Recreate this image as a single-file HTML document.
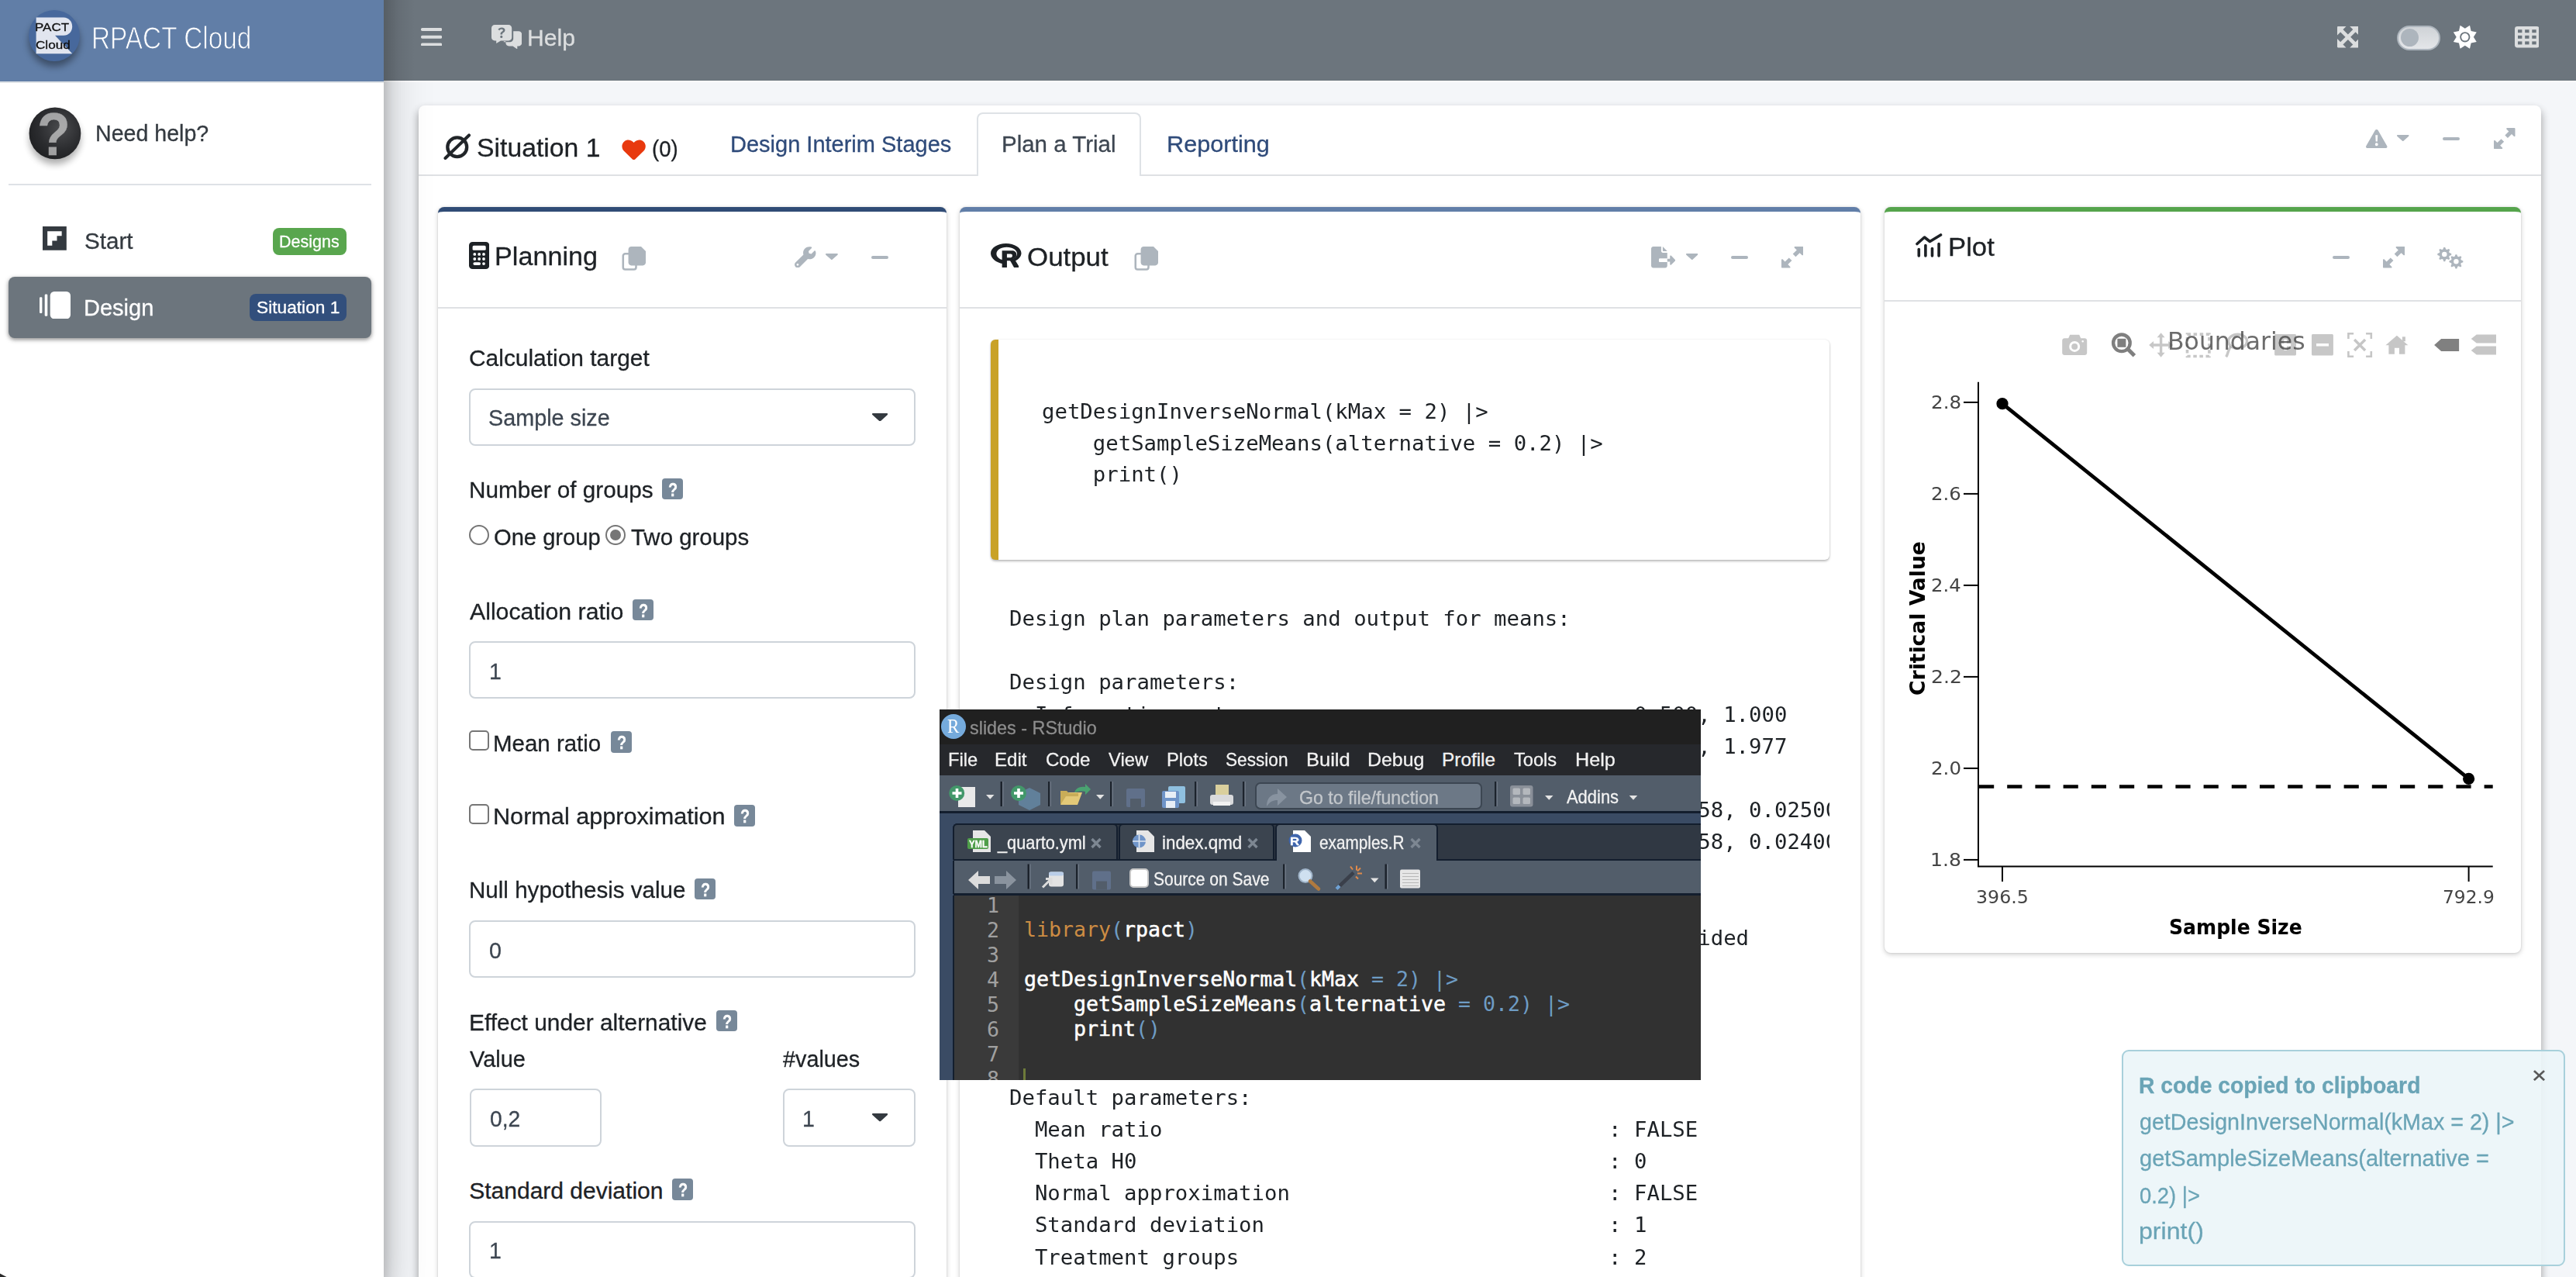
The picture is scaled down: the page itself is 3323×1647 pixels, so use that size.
<!DOCTYPE html>
<html lang="en"><head><meta charset="utf-8"><title>RPACT Cloud</title>
<style>
*{box-sizing:border-box}
html,body{margin:0;padding:0}
body{width:3323px;height:1647px;overflow:hidden;background:#f4f6f9;font-family:"Liberation Sans",sans-serif;color:#212529}
#wrap{position:relative;width:3323px;height:1647px;overflow:hidden;background:#f4f6f9}
#wrap div,#wrap span,#wrap svg,#wrap pre,#wrap a,#wrap h1,#wrap h2,#wrap h3,#wrap label,#wrap p,#wrap b,#wrap i,#wrap li{position:absolute;margin:0;padding:0}
#wrap main,#wrap aside,#wrap header,#wrap section,#wrap nav,#wrap ul,#wrap form,#wrap footer{position:static;display:block;margin:0;padding:0;list-style:none}
#wrap .clip{overflow:hidden}
.t{white-space:pre;line-height:1;transform-origin:0 50%;font-weight:400;font-style:normal;text-decoration:none}
.fs{font-family:"Liberation Sans",sans-serif;-webkit-text-stroke:.3px}
.fm{font-family:"Liberation Mono",monospace}
.fd{font-family:"DejaVu Sans","Liberation Sans",sans-serif}
.fdm{font-family:"DejaVu Sans Mono","Liberation Mono",monospace}
.fse{font-family:"Liberation Serif",serif}
.card{background:#fff;border-radius:8px;box-shadow:0 0 2px rgba(0,0,0,.125),0 2px 6px rgba(0,0,0,.2)}
.hline{background:#dfe1e4;height:2px}
.inp{background:#fff;border:2px solid #ced4da;border-radius:8px}
.hb{background:#778899;border-radius:4px;width:27px;height:27px}
.chk{border:2px solid #767676;border-radius:5px;background:#fff;width:26px;height:26px}
.rad{border:2px solid #767676;border-radius:50%;background:#fff;width:26px;height:26px}
</style></head>
<body>
<div id="wrap">
<main>
<div style="left:495px;top:103px;width:2828px;height:2.6px;background:#fdfdfe"></div>
<div class="card" style="left:540px;top:136px;width:2738px;height:1600px;box-shadow:0 6px 12px rgba(0,0,0,.16),0 6px 12px rgba(0,0,0,.23)"></div>
<div class="hline" style="left:540px;top:225px;width:2738px;height:2px;"></div>
<nav>
<h1 class="t fs" id="t0" style="font-size:34px;color:#1d2125;left:614.67px;top:172.6px;transform:scaleX(0.9926);">Situation 1</h1><svg style="left:572px;top:171.5px;width:35.5px;height:34.5px;" viewBox="0 0 36 35" preserveAspectRatio="none"><circle cx="18" cy="18" r="12.6" fill="none" stroke="#212529" stroke-width="4.4"/><path d="M2.5 32.5L33.5 2.5" stroke="#212529" stroke-width="4" stroke-linecap="round"/></svg>
<svg style="left:801.8px;top:179.7px;width:31.2px;height:26.5px;" viewBox="0 0 32 28" preserveAspectRatio="none"><path fill="#e8390e" d="M16 27.6C15.4 27.6 14.8 27.4 14.3 26.9L3 15.6C-0.6 12-0.4 6 3.4 2.6 6.8-0.4 11.9 0.1 15 3.3L16 4.3 17 3.3C20.1 0.1 25.2-0.4 28.6 2.6 32.4 6 32.6 12 29 15.6L17.7 26.9C17.2 27.4 16.6 27.6 16 27.6Z"/></svg>
<span class="t fs" id="t1" style="font-size:30px;color:#1d2125;left:840.79px;top:176.6px;transform:scaleX(0.9195);">(0)</span><a class="t fs" id="t2" style="font-size:30px;color:#2f4b7a;left:941.52px;top:171.1px;transform:scaleX(0.9667);">Design Interim Stages</a><div style="left:1260px;top:145px;width:212px;height:82px;background:#fff;border:2px solid #dee2e6;border-bottom:none;border-radius:8px 8px 0 0"></div>
<a class="t fs" id="t3" style="font-size:30px;color:#3d4651;left:1292.28px;top:171.1px;transform:scaleX(0.9828);">Plan a Trial</a><a class="t fs" id="t4" style="font-size:30px;color:#2f4b7a;left:1505.19px;top:171.1px;transform:scaleX(1.0216);">Reporting</a><svg style="left:3052px;top:166.8px;width:27.5px;height:24px;" viewBox="0 0 28 24" preserveAspectRatio="none"><path fill="#adb5bd" fill-rule="evenodd" d="M15.9 1.1L27.7 21.2C28.5 22.5 27.5 24 26 24H2C0.5 24-0.5 22.5 0.3 21.2L12.1 1.1C12.9-0.3 15.1-0.3 15.9 1.1ZM12.5 7.2L12.9 15.4H15.1L15.5 7.2ZM14 17.2A2 2 0 1 0 14 21.2 2 2 0 1 0 14 17.2Z"/></svg>
<svg style="left:3092.3px;top:173.8px;width:15.5px;height:8.2px;" viewBox="0 0 20 10" preserveAspectRatio="none"><path fill="#adb5bd" d="M1.2 0H18.8C19.9 0 20.4 1.3 19.6 2L10.9 9.6C10.4 10.1 9.6 10.1 9.1 9.6L0.4 2C-0.4 1.3 0.1 0 1.2 0Z"/></svg>
<div style="left:3151px;top:176.6px;width:21.8px;height:4.3px;background:#adb5bd;border-radius:2px"></div>
<svg style="left:3217px;top:165.1px;width:27.5px;height:27.1px;" viewBox="0 0 28 28" preserveAspectRatio="none"><g fill="#adb5bd"><path d="M17.5 0H27C27.6 0 28 .4 28 1V10.5C28 11.4 26.9 11.8 26.3 11.2L23.4 8.3 18.3 13.4 14.6 9.7 19.7 4.6 16.8 1.7C16.2 1.1 16.6 0 17.5 0Z"/><path d="M10.5 28H1C.4 28 0 27.6 0 27V17.5C0 16.6 1.1 16.2 1.7 16.8L4.6 19.7 9.7 14.6 13.4 18.3 8.3 23.4 11.2 26.3C11.8 26.9 11.4 28 10.5 28Z"/></g></svg>
</nav>
<section>
<div class="card" style="left:565px;top:267px;width:656px;height:1500px;border-top:6px solid #304c76"></div>
<div class="hline" style="left:565px;top:395.5px;width:656px;height:2px;"></div>
<svg style="left:605px;top:312px;width:26.3px;height:35px;" viewBox="0 0 26.300 35" preserveAspectRatio="none"><rect x="0" y="0" width="26.300" height="35" rx="4.600" fill="#1d2125"/><rect x="4.600" y="4.800" width="17.100" height="6" rx="1.600" fill="#fff"/><circle cx="7.3" cy="15.9" r="1.900" fill="#fff"/><circle cx="13.15" cy="15.9" r="1.900" fill="#fff"/><circle cx="19" cy="15.9" r="1.900" fill="#fff"/><circle cx="7.3" cy="22" r="1.900" fill="#fff"/><circle cx="13.15" cy="22" r="1.900" fill="#fff"/><circle cx="19" cy="22" r="1.900" fill="#fff"/><rect x="5.400" y="26.200" width="9.700" height="3.800" rx="1.900" fill="#fff"/><circle cx="19" cy="28.100" r="1.900" fill="#fff"/></svg>
<h3 class="t fs" id="t5" style="font-size:33px;color:#1d2125;left:638.1px;top:314.2px;transform:scaleX(1.0354);">Planning</h3><svg style="left:802.3px;top:318.1px;width:31.5px;height:31px;" viewBox="0 0 32 31" preserveAspectRatio="none"><path fill="none" stroke="#adb5bd" stroke-width="2.6" d="M9.5 9.3H4.6C3 9.3 1.8 10.5 1.8 12.1V26.7C1.8 28.3 3 29.5 4.6 29.5H16C17.6 29.5 18.8 28.3 18.8 26.7V23"/><path fill="#adb5bd" d="M12.6 0H25.4L31.5 6V20.6C31.5 22.8 29.8 24.5 27.6 24.5H12.6C10.4 24.5 8.7 22.8 8.7 20.6V3.9C8.7 1.7 10.4 0 12.6 0Z"/></svg>
<svg style="left:1025.1px;top:318.2px;width:27.6px;height:27.3px;" viewBox="0 0 28 28" preserveAspectRatio="none"><path fill="#adb5bd" fill-rule="evenodd" d="M27.4 6.1C27.2 5.4 26.4 5.2 25.9 5.7L21.9 9.7 18.9 9.1 18.3 6.1 22.3 2.1C22.8 1.6 22.6 .8 21.9 .6 19.1-.4 15.8.3 13.6 2.5 11.4 4.700 10.700 7.900 11.600 10.700L1.200 21.100C-.400 22.700-.400 25.200 1.200 26.800 2.800 28.400 5.300 28.400 6.900 26.800L17.300 16.400C20.100 17.300 23.300 16.600 25.500 14.400 27.700 12.200 28.400 8.900 27.400 6.100ZM4 25.300A1.400 1.400 0 1 1 4 22.500 1.400 1.400 0 1 1 4 25.300Z"/></svg>
<svg style="left:1065px;top:326.6px;width:15.8px;height:8.2px;" viewBox="0 0 20 10" preserveAspectRatio="none"><path fill="#adb5bd" d="M1.2 0H18.8C19.9 0 20.4 1.3 19.6 2L10.9 9.6C10.4 10.1 9.6 10.1 9.1 9.6L0.4 2C-0.4 1.3 0.1 0 1.2 0Z"/></svg>
<div style="left:1123.8px;top:329.8px;width:22.4px;height:4.2px;background:#adb5bd;border-radius:2px"></div>
<form>
<label class="t fs" id="t6" style="font-size:30px;color:#1d2125;left:604.88px;top:447.4px;transform:scaleX(0.9969);">Calculation target</label><div class="inp" style="left:605px;top:501px;width:575.5px;height:74.4px;"></div>
<span class="t fs" id="t7" style="font-size:30px;color:#3d4651;left:630.49px;top:524.2px;transform:scaleX(0.9589);">Sample size</span><svg style="left:1124.6px;top:532.7px;width:20.3px;height:10.4px;" viewBox="0 0 20 10" preserveAspectRatio="none"><path fill="#343a40" d="M1.2 0H18.8C19.9 0 20.4 1.3 19.6 2L10.9 9.6C10.4 10.1 9.6 10.1 9.1 9.6L0.4 2C-0.4 1.3 0.1 0 1.2 0Z"/></svg>
<label class="t fs" id="t8" style="font-size:30px;color:#1d2125;left:604.96px;top:617.1px;transform:scaleX(0.9895);">Number of groups</label><div class="hb" style="left:854.1px;top:616.9px;width:27.4px;height:27.3px;"></div>
<span class="t fs" id="t9" style="font-size:23.5px;color:#fff;font-weight:700;left:861.99px;top:620.9px;transform:scaleX(0.8468);">?</span><div class="rad" style="left:605.2px;top:677px;width:26px;height:26px;"></div>
<span class="t fs" id="t10" style="font-size:30px;color:#1d2125;left:637.32px;top:678.2px;transform:scaleX(0.9712);">One group</span><div class="rad" style="left:781.1px;top:677px;width:26px;height:26px;"><i style="left:4px;top:4px;width:14px;height:14px;border-radius:50%;background:#767676"></i></div>
<span class="t fs" id="t11" style="font-size:30px;color:#1d2125;left:814.24px;top:678.2px;transform:scaleX(0.9815);">Two groups</span><label class="t fs" id="t12" style="font-size:30px;color:#1d2125;left:605.94px;top:773.8px;transform:scaleX(1.0084);">Allocation ratio</label><div class="hb" style="left:816px;top:773.1px;width:27.4px;height:27.3px;"></div>
<span class="t fs" id="t13" style="font-size:23.5px;color:#fff;font-weight:700;left:823.89px;top:777.1px;transform:scaleX(0.8468);">?</span><div class="inp" style="left:605px;top:827px;width:575.5px;height:74.4px;"></div>
<span class="t fs" id="t14" style="font-size:30px;color:#3d4651;left:631.03px;top:850.9px;transform:scaleX(0.9507);">1</span><div class="chk" style="left:605.2px;top:942.3px;width:26px;height:26px;"></div>
<label class="t fs" id="t15" style="font-size:30px;color:#1d2125;left:636.28px;top:943.8px;transform:scaleX(0.9824);">Mean ratio</label><div class="hb" style="left:788px;top:943.3px;width:27.4px;height:27.3px;"></div>
<span class="t fs" id="t16" style="font-size:23.5px;color:#fff;font-weight:700;left:795.89px;top:947.3px;transform:scaleX(0.8468);">?</span><div class="chk" style="left:605.2px;top:1037px;width:26px;height:26px;"></div>
<label class="t fs" id="t17" style="font-size:30px;color:#1d2125;left:636.19px;top:1038.3px;transform:scaleX(1.021);">Normal approximation</label><div class="hb" style="left:947px;top:1038.3px;width:27.4px;height:27.3px;"></div>
<span class="t fs" id="t18" style="font-size:23.5px;color:#fff;font-weight:700;left:954.89px;top:1042.3px;transform:scaleX(0.8468);">?</span><label class="t fs" id="t19" style="font-size:30px;color:#1d2125;left:604.97px;top:1133.4px;transform:scaleX(0.9857);">Null hypothesis value</label><div class="hb" style="left:896px;top:1133.2px;width:27.4px;height:27.3px;"></div>
<span class="t fs" id="t20" style="font-size:23.5px;color:#fff;font-weight:700;left:903.89px;top:1137.2px;transform:scaleX(0.8468);">?</span><div class="inp" style="left:605px;top:1187px;width:575.5px;height:74.4px;"></div>
<span class="t fs" id="t21" style="font-size:30px;color:#3d4651;left:630.68px;top:1210.7px;transform:scaleX(0.9551);">0</span><label class="t fs" id="t22" style="font-size:30px;color:#1d2125;left:605.05px;top:1303.5px;transform:scaleX(0.9965);">Effect under alternative</label><div class="hb" style="left:924px;top:1303px;width:27.4px;height:27.3px;"></div>
<span class="t fs" id="t23" style="font-size:23.5px;color:#fff;font-weight:700;left:931.89px;top:1307px;transform:scaleX(0.8468);">?</span><label class="t fs" id="t24" style="font-size:30px;color:#1d2125;left:605.87px;top:1350.7px;transform:scaleX(0.9651);">Value</label><label class="t fs" id="t25" style="font-size:30px;color:#1d2125;left:1010.47px;top:1350.7px;transform:scaleX(0.96);">#values</label><div class="inp" style="left:606px;top:1404px;width:170px;height:75px;"></div>
<span class="t fs" id="t26" style="font-size:30px;color:#3d4651;left:631.5px;top:1428px;transform:scaleX(0.9427);">0,2</span><div class="inp" style="left:1010px;top:1404px;width:171px;height:75px;"></div>
<span class="t fs" id="t27" style="font-size:30px;color:#3d4651;left:1035.33px;top:1428px;transform:scaleX(0.9507);">1</span><svg style="left:1124.6px;top:1436.2px;width:20.3px;height:10.4px;" viewBox="0 0 20 10" preserveAspectRatio="none"><path fill="#343a40" d="M1.2 0H18.8C19.9 0 20.4 1.3 19.6 2L10.9 9.6C10.4 10.1 9.6 10.1 9.1 9.6L0.4 2C-0.4 1.3 0.1 0 1.2 0Z"/></svg>
<label class="t fs" id="t28" style="font-size:30px;color:#1d2125;left:605.24px;top:1520.9px;">Standard deviation</label><div class="hb" style="left:867px;top:1520.4px;width:27.4px;height:27.3px;"></div>
<span class="t fs" id="t29" style="font-size:23.5px;color:#fff;font-weight:700;left:874.89px;top:1524.4px;transform:scaleX(0.8468);">?</span><div class="inp" style="left:605px;top:1575px;width:575.5px;height:74px;"></div>
<span class="t fs" id="t30" style="font-size:30px;color:#3d4651;left:631.03px;top:1597.6px;transform:scaleX(0.9507);">1</span></form>
</section>
<section>
<div class="card" style="left:1238px;top:267px;width:1162px;height:1500px;border-top:6px solid #617ea8"></div>
<div class="hline" style="left:1238px;top:395.5px;width:1162px;height:2px;"></div>
<svg style="left:1278px;top:314px;width:39.5px;height:31.3px;" viewBox="0 0 40 31.5" preserveAspectRatio="none"><path fill="#1d2125" fill-rule="evenodd" d="M20 0C31 0 40 5.600 40 12.600 40 16.800 36.800 20.500 31.800 22.800L29.800 19.600C32.700 18.200 34.500 15.900 34.500 13.400 34.500 8.600 28.800 4.700 20.900 4.700 13 4.700 7.500 8.600 7.500 13.400 7.500 17.200 10.900 20.400 16 21.600V26.300C6.800 24.900 0 19.300 0 12.600 0 5.600 9 0 20 0Z"/><path fill="#1d2125" fill-rule="evenodd" d="M14.800 9.400H27.600C31.400 9.400 33.800 11.400 33.800 14.600 33.800 17.200 32.200 19 29.800 19.700 30.800 20.100 31.400 20.800 32.200 22.100L36.500 29.300V31.500H30.600L26.600 24.300C25.800 22.900 25.200 22.500 24 22.500H21.200V31.500H14.800ZM21.200 13.600V18.300H26C27.400 18.300 28.300 17.400 28.300 15.900 28.300 14.400 27.400 13.600 26 13.600Z"/></svg>
<h3 class="t fs" id="t31" style="font-size:33px;color:#1d2125;left:1324.95px;top:314.8px;transform:scaleX(1.0568);">Output</h3><svg style="left:1462.9px;top:318.1px;width:31.5px;height:31px;" viewBox="0 0 32 31" preserveAspectRatio="none"><path fill="none" stroke="#adb5bd" stroke-width="2.6" d="M9.5 9.3H4.6C3 9.3 1.8 10.5 1.8 12.1V26.7C1.8 28.3 3 29.5 4.6 29.5H16C17.6 29.5 18.8 28.3 18.8 26.7V23"/><path fill="#adb5bd" d="M12.6 0H25.4L31.5 6V20.6C31.5 22.8 29.8 24.5 27.6 24.5H12.6C10.4 24.5 8.7 22.8 8.7 20.6V3.9C8.7 1.7 10.4 0 12.6 0Z"/></svg>
<svg style="left:2130px;top:318px;width:31.3px;height:27.5px;" viewBox="0 0 31.5 27.5" preserveAspectRatio="none"><path fill="#adb5bd" d="M2.800 0H13V5.800C13 7 14 8 15.200 8H20.900V15.200H11.400C10.600 15.200 10 15.800 10 16.600V18.700C10 19.500 10.600 20.100 11.400 20.100H20.900V24.700C20.900 26.200 19.700 27.500 18.100 27.500H2.800C1.300 27.500 0 26.200 0 24.700V2.800C0 1.300 1.300 0 2.800 0ZM15 0L20.900 6H15.900C15.400 6 15 5.600 15 5.100Z"/><path fill="#adb5bd" d="M31.100 16.900L26 11.800C25.400 11.200 24.400 11.600 24.400 12.500V15.700H20.900V19.600H24.400V22.800C24.400 23.700 25.400 24.100 26 23.500L31.100 18.400C31.500 18 31.500 17.300 31.100 16.900Z"/></svg>
<svg style="left:2174.5px;top:326.6px;width:15.5px;height:8.2px;" viewBox="0 0 20 10" preserveAspectRatio="none"><path fill="#adb5bd" d="M1.2 0H18.8C19.9 0 20.4 1.3 19.6 2L10.9 9.6C10.4 10.1 9.6 10.1 9.1 9.6L0.4 2C-0.4 1.3 0.1 0 1.2 0Z"/></svg>
<div style="left:2233.4px;top:329.8px;width:22px;height:4.2px;background:#adb5bd;border-radius:2px"></div>
<svg style="left:2297.6px;top:318px;width:28.2px;height:27.6px;" viewBox="0 0 28 28" preserveAspectRatio="none"><g fill="#adb5bd"><path d="M17.5 0H27C27.6 0 28 .4 28 1V10.5C28 11.4 26.9 11.8 26.3 11.2L23.4 8.3 18.3 13.4 14.6 9.7 19.7 4.6 16.8 1.7C16.2 1.1 16.6 0 17.5 0Z"/><path d="M10.5 28H1C.4 28 0 27.6 0 27V17.5C0 16.6 1.1 16.2 1.7 16.8L4.6 19.7 9.7 14.6 13.4 18.3 8.3 23.4 11.2 26.3C11.8 26.9 11.4 28 10.5 28Z"/></g></svg>
<div style="left:1278px;top:438px;width:1082px;height:284px;background:#fff;border-left:10px solid #c9a227;border-radius:6px;box-shadow:0 2px 3px rgba(0,0,0,.25),0 0 2px rgba(0,0,0,.12)"></div>
<pre class="t fdm" id="t32" style="font-size:26.4px;color:#1d2125;left:1343.6px;top:517.8px;transform:scaleX(1.0353);">getDesignInverseNormal(kMax = 2) |&gt;</pre><pre class="t fdm" id="t33" style="font-size:26.4px;color:#1d2125;left:1343.6px;top:558.6px;transform:scaleX(1.0353);">    getSampleSizeMeans(alternative = 0.2) |&gt;</pre><pre class="t fdm" id="t34" style="font-size:26.4px;color:#1d2125;left:1343.6px;top:599px;transform:scaleX(1.0353);">    print()</pre><div class="clip" style="left:1278px;top:740px;width:1082px;height:920px;"><pre class="t fdm" id="t35" style="font-size:26.4px;color:#1d2125;left:23.6px;top:45px;transform:scaleX(1.0353);">Design plan parameters and output for means:</pre>
<pre class="t fdm" id="t36" style="font-size:26.4px;color:#1d2125;left:23.6px;top:127.36px;transform:scaleX(1.0353);">Design parameters:</pre>
<pre class="t fdm" id="t37" style="font-size:26.4px;color:#1d2125;left:23.6px;top:168.54px;transform:scaleX(1.0353);">  Information rates                            : 0.500, 1.000</pre>
<pre class="t fdm" id="t38" style="font-size:26.4px;color:#1d2125;left:23.6px;top:209.72px;transform:scaleX(1.0353);">  Critical values                              : 2.797, 1.977</pre>
<pre class="t fdm" id="t39" style="font-size:26.4px;color:#1d2125;left:23.6px;top:250.9px;transform:scaleX(1.0353);">  Futility bounds (binding)                    : -Inf</pre>
<pre class="t fdm" id="t40" style="font-size:26.4px;color:#1d2125;left:23.6px;top:292.08px;transform:scaleX(1.0353);">  Cumulative alpha spending                    : 0.00258, 0.02500</pre>
<pre class="t fdm" id="t41" style="font-size:26.4px;color:#1d2125;left:23.6px;top:333.26px;transform:scaleX(1.0353);">  Local one-sided significance levels          : 0.00258, 0.02400</pre>
<pre class="t fdm" id="t42" style="font-size:26.4px;color:#1d2125;left:23.6px;top:374.44px;transform:scaleX(1.0353);">  Significance level                           : 0.025</pre>
<pre class="t fdm" id="t43" style="font-size:26.4px;color:#1d2125;left:23.6px;top:415.62px;transform:scaleX(1.0353);">  Type II error rate                           : 0.200</pre>
<pre class="t fdm" id="t44" style="font-size:26.4px;color:#1d2125;left:23.6px;top:456.8px;transform:scaleX(1.0353);">  Test                                         : one-sided</pre>
<pre class="t fdm" id="t45" style="font-size:26.4px;color:#1d2125;left:23.6px;top:539.16px;transform:scaleX(1.0353);">User defined parameters:</pre>
<pre class="t fdm" id="t46" style="font-size:26.4px;color:#1d2125;left:23.6px;top:580.34px;transform:scaleX(1.0353);">  Alternatives                                 : 0.2</pre>
<pre class="t fdm" id="t47" style="font-size:26.4px;color:#1d2125;left:23.6px;top:662.7px;transform:scaleX(1.0353);">Default parameters:</pre>
<pre class="t fdm" id="t48" style="font-size:26.4px;color:#1d2125;left:23.6px;top:703.88px;transform:scaleX(1.0353);">  Mean ratio                                   : FALSE</pre>
<pre class="t fdm" id="t49" style="font-size:26.4px;color:#1d2125;left:23.6px;top:745.06px;transform:scaleX(1.0353);">  Theta H0                                     : 0</pre>
<pre class="t fdm" id="t50" style="font-size:26.4px;color:#1d2125;left:23.6px;top:786.24px;transform:scaleX(1.0353);">  Normal approximation                         : FALSE</pre>
<pre class="t fdm" id="t51" style="font-size:26.4px;color:#1d2125;left:23.6px;top:827.42px;transform:scaleX(1.0353);">  Standard deviation                           : 1</pre>
<pre class="t fdm" id="t52" style="font-size:26.4px;color:#1d2125;left:23.6px;top:868.6px;transform:scaleX(1.0353);">  Treatment groups                             : 2</pre></div>
</section>
<section>
<div class="card" style="left:2431px;top:267px;width:821px;height:962px;border-top:6px solid #55a44c"></div>
<div class="hline" style="left:2431px;top:386.5px;width:821px;height:2px;"></div>
<svg style="left:2471.4px;top:301.4px;width:34.5px;height:31px;" viewBox="0 0 34.5 31" preserveAspectRatio="none"><g fill="none" stroke="#1d2125" stroke-width="3.6" stroke-linecap="round" stroke-linejoin="round"><path d="M2 13.500L11.500 5 18.500 10.500 32.500 2"/><path d="M4.300 20.500V29"/><path d="M12.900 15.500V29"/><path d="M21.500 19.500V29"/><path d="M30.100 13.500V29"/></g></svg>
<h3 class="t fs" id="t53" style="font-size:33px;color:#1d2125;left:2513.05px;top:302.2px;transform:scaleX(1.0514);">Plot</h3><div style="left:3008.7px;top:329.8px;width:22px;height:4.2px;background:#adb5bd;border-radius:2px"></div>
<svg style="left:3074px;top:318px;width:28.2px;height:27.6px;" viewBox="0 0 28 28" preserveAspectRatio="none"><g fill="#adb5bd"><path d="M17.5 0H27C27.6 0 28 .4 28 1V10.5C28 11.4 26.9 11.8 26.3 11.2L23.4 8.3 18.3 13.4 14.6 9.7 19.7 4.6 16.8 1.7C16.2 1.1 16.6 0 17.5 0Z"/><path d="M10.5 28H1C.4 28 0 27.6 0 27V17.5C0 16.6 1.1 16.2 1.7 16.8L4.6 19.7 9.7 14.6 13.4 18.3 8.3 23.4 11.2 26.3C11.8 26.9 11.4 28 10.5 28Z"/></g></svg>
<svg style="left:3143.8px;top:319.3px;width:34.2px;height:27.5px;" viewBox="0 0 35 27.5" preserveAspectRatio="none"><path fill="#adb5bd" fill-rule="evenodd" d="M18.66 8.10L18.66 9.90L16.01 10.97L15.50 12.21L16.61 14.84L15.34 16.11L12.71 15.00L11.47 15.51L10.40 18.16L8.60 18.16L7.53 15.51L6.29 15.00L3.66 16.11L2.39 14.84L3.50 12.21L2.99 10.97L0.34 9.90L0.34 8.10L2.99 7.03L3.50 5.79L2.39 3.16L3.66 1.89L6.29 3.00L7.53 2.49L8.60 -0.16L10.40 -0.16L11.47 2.49L12.71 3.00L15.34 1.89L16.61 3.16L15.50 5.79L16.01 7.03ZM6.19 9.00A3.31 3.31 0 1 0 12.81 9.00 3.31 3.31 0 1 0 6.19 9.00ZM34.16 17.40L34.16 19.20L31.51 20.27L31.00 21.51L32.11 24.14L30.84 25.41L28.21 24.30L26.97 24.81L25.90 27.46L24.10 27.46L23.03 24.81L21.79 24.30L19.16 25.41L17.89 24.14L19.00 21.51L18.49 20.27L15.84 19.20L15.84 17.40L18.49 16.33L19.00 15.09L17.89 12.46L19.16 11.19L21.79 12.30L23.03 11.79L24.10 9.14L25.90 9.14L26.97 11.79L28.21 12.30L30.84 11.19L32.11 12.46L31.00 15.09L31.51 16.33ZM21.69 18.30A3.31 3.31 0 1 0 28.31 18.30 3.31 3.31 0 1 0 21.69 18.30Z"/></svg>
<span class="t fd" id="t54" style="font-size:31.7px;color:#6c6c6c;left:2795.51px;top:424.6px;transform:scaleX(0.9942);">Boundaries</span><svg style="left:2650px;top:420px;width:590px;height:50px;" viewBox="2650 420 590 50"><g transform="translate(2660.200 431.700)"><path fill="#444" opacity=".3" fill-rule="evenodd" d="M3 4.500H8L10 0H22L24 4.500H29C30.700 4.500 32 5.800 32 7.500V23.200C32 24.900 30.700 26.200 29 26.200H3C1.300 26.200 0 24.900 0 23.200V7.500C0 5.800 1.300 4.500 3 4.500ZM16 8.200A7 7 0 1 0 16 22.200 7 7 0 1 0 16 8.200ZM16 11.200A4 4 0 1 1 16 19.200 4 4 0 1 1 16 11.200ZM26.500 7.200A1.300 1.300 0 1 0 26.500 9.800 1.300 1.300 0 1 0 26.500 7.200Z"/></g><g transform="translate(2723.900 429.300)" opacity=".68"><circle cx="13" cy="13" r="10.800" fill="none" stroke="#444" stroke-width="4.400"/><rect x="7.500" y="7.500" width="11" height="11" fill="#444"/><path d="M21.500 21.500L29.500 29.500" stroke="#444" stroke-width="5" stroke-linecap="butt"/></g><g transform="translate(2772.100 429.300)" fill="#444" opacity=".3"><path d="M15.500 0L20.500 6H17.200V14H25V10.700L31 15.700 25 20.700V17.400H17.200V25.400H20.500L15.500 31.400 10.500 25.400H13.800V17.400H6V20.700L0 15.700 6 10.700V14H13.800V6H10.500Z"/></g><g transform="translate(2819.700 429.300)"><rect x="1.800" y="1.800" width="28.400" height="28.400" fill="none" stroke="#444" opacity=".3" stroke-width="3.600" stroke-dasharray="4.500 3.600"/></g><g transform="translate(2869.600 429.300)"><ellipse cx="17" cy="11" rx="12" ry="9" fill="none" stroke="#444" opacity=".3" stroke-width="3.400"/><path d="M8 18C4 22 5 27 2 31" fill="none" stroke="#444" opacity=".3" stroke-width="3.400"/></g><g transform="translate(2934.100 431)"><path fill-rule="evenodd" fill="#444" opacity=".3" d="M1.500 0H26.400C27.200 0 27.900 .7 27.900 1.500V26.100C27.900 26.900 27.200 27.600 26.400 27.600H1.500C.7 27.600 0 26.900 0 26.100V1.500C0 .7 .7 0 1.500 0ZM12.200 6.800V12H7V15.600H12.200V20.800H15.800V15.600H21V12H15.800V6.800Z"/></g><g transform="translate(2982 431)"><path fill-rule="evenodd" fill="#444" opacity=".3" d="M1.500 0H26.400C27.200 0 27.900 .7 27.900 1.500V26.100C27.900 26.900 27.200 27.600 26.400 27.600H1.500C.7 27.600 0 26.900 0 26.100V1.500C0 .7 .7 0 1.500 0ZM6 12V15.600H22V12Z"/></g><g transform="translate(3028.100 429)" fill="none" stroke="#444" opacity=".3" stroke-width="2.600"><path d="M1.300 8V1.300H8M24 1.300H30.700V8M30.700 24V30.700H24M8 30.700H1.300V24"/><path d="M9 9L23 23M23 9L9 23" stroke-width="3.400"/></g><g transform="translate(3077.400 432.800)" fill="#444" opacity=".3"><path d="M14.500 0L29 12.500H25V24H17.500V16H11.500V24H4V12.500H0Z"/><rect x="21.500" y="1.500" width="4" height="6"/></g><g transform="translate(3140.100 436.900)" fill="#444" opacity=".68"><path d="M9 0H32V16.100H9L0 8Z"/></g><g transform="translate(3187.700 431.400)" fill="#444" opacity=".3"><path d="M7 0H32.300V11H7L0 5.500Z"/><path d="M7 15H32.300V26H7L0 20.500Z"/></g></svg>
<svg style="left:2431px;top:390px;width:821px;height:839px" viewBox="2431 390 821 839"><g stroke="#000" stroke-width="2" fill="none"><path d="M2552 492.7V1117.4H3215.7"/><path d="M2533 518.9H2552"/><path d="M2533 636.9H2552"/><path d="M2533 754.9H2552"/><path d="M2533 872.9H2552"/><path d="M2533 990.9H2552"/><path d="M2533 1108.9H2552"/><path d="M2583 1117.4V1137"/><path d="M3184.6 1117.4V1137"/></g><path d="M2553 1014.5H3215.7" stroke="#000" stroke-width="4.6" stroke-dasharray="19.2 17" fill="none"/><path d="M2583 520.67L3184.6 1004.47" stroke="#000" stroke-width="4.8" fill="none"/><circle cx="2583" cy="520.67" r="7.6"/><circle cx="3184.6" cy="1004.47" r="7.6"/></svg>
<span class="t fd" id="t55" style="font-size:22.7px;color:#444;left:2490.8px;top:508.3px;transform:scaleX(1.0827);">2.8</span><span class="t fd" id="t56" style="font-size:22.7px;color:#444;left:2490.81px;top:626.3px;transform:scaleX(1.0787);">2.6</span><span class="t fd" id="t57" style="font-size:22.7px;color:#444;left:2490.81px;top:744.3px;transform:scaleX(1.0737);">2.4</span><span class="t fd" id="t58" style="font-size:22.7px;color:#444;left:2490.76px;top:862.3px;transform:scaleX(1.107);">2.2</span><span class="t fd" id="t59" style="font-size:22.7px;color:#444;left:2490.8px;top:980.3px;transform:scaleX(1.0813);">2.0</span><span class="t fd" id="t60" style="font-size:22.7px;color:#444;left:2489.83px;top:1098.3px;transform:scaleX(1.1108);">1.8</span><span class="t fd" id="t61" style="font-size:22.7px;color:#444;left:2549.19px;top:1146.4px;transform:scaleX(1.0451);">396.5</span><span class="t fd" id="t62" style="font-size:22.7px;color:#444;left:3151.49px;top:1146.4px;transform:scaleX(1.0277);">792.9</span><span class="t fd" id="t63" style="font-size:27px;color:#000;font-weight:700;left:2797.6px;top:1181.6px;transform:scaleX(0.929);">Sample Size</span><div style="left:2483.2px;top:896.3px;width:0;height:0;transform:rotate(-90deg);transform-origin:0 0"><span class="t fd" id="t64" style="font-size:27.4px;color:#000;font-weight:700;left:-1.33px;top:-23px;transform:scaleX(0.9713);">Critical Value</span></div>
</section>
</main>
<aside>
<div style="left:0px;top:0px;width:495px;height:1647px;background:#fff;box-shadow:0 28px 56px rgba(0,0,0,.25),0 20px 20px rgba(0,0,0,.22)"></div>
<div style="left:0px;top:0px;width:495px;height:104.5px;background:#617ea7"></div>
<div style="left:0px;top:104.5px;width:495px;height:2px;background:#dee2e6"></div>
<svg style="left:20px;top:-4px;width:100px;height:100px;" viewBox="0 0 100 100" preserveAspectRatio="none"><defs><filter id="lsh" x="-40%" y="-40%" width="180%" height="200%"><feGaussianBlur stdDeviation="5"/></filter></defs><ellipse cx="50" cy="57" rx="33" ry="33" fill="#000" opacity=".38" filter="url(#lsh)"/><circle cx="50" cy="50" r="33" fill="#47689c"/><path fill="#e1e5ef" d="M26.600 26.600H62C68.500 26.600 73.200 31.800 73.200 38.200 73.200 44.600 68.500 49.800 62 49.800H51L73.200 73.200H26.600Z"/></svg>
<span class="t fs" id="t65" style="font-size:15px;color:#111;left:45.21px;top:26.9px;transform:scaleX(1.1331);">PACT</span><span class="t fs" id="t66" style="font-size:15px;color:#111;left:45.73px;top:50px;transform:scaleX(1.1394);">Cloud</span><span class="t fs" id="t67" style="font-size:40.5px;color:#fff;left:117.76px;top:29px;transform:scaleX(0.8236);-webkit-text-stroke:1px #617ea7;">RPACT Cloud</span><svg style="left:20.5px;top:121.5px;width:99.9px;height:99.9px;" viewBox="0 0 100 100" preserveAspectRatio="none"><defs><filter id="hsh" x="-40%" y="-40%" width="180%" height="200%"><feGaussianBlur stdDeviation="5"/></filter><radialGradient id="hg" cx="60%" cy="40%" r="70%"><stop offset="0" stop-color="#4a4b4e"/><stop offset=".6" stop-color="#2b2c2f"/><stop offset="1" stop-color="#1d1e20"/></radialGradient></defs><ellipse cx="50" cy="57" rx="33" ry="33" fill="#000" opacity=".32" filter="url(#hsh)"/><circle cx="50" cy="50" r="33.400" fill="url(#hg)"/></svg>
<span class="t fs" id="t68" style="font-size:78px;color:#cfcfcf;font-weight:700;left:48.29px;top:133.5px;transform:scaleX(0.8969);opacity:.72;">?</span><a class="t fs" id="t69" style="font-size:30px;color:#343a40;left:123.36px;top:157px;transform:scaleX(0.9527);">Need help?</a><div style="left:11px;top:236.5px;width:468px;height:2px;background:#dee2e6"></div>
<ul>
<svg style="left:55.2px;top:292.1px;width:30.8px;height:30.8px;" viewBox="0 0 31 31" preserveAspectRatio="none"><path fill="#343a40" fill-rule="evenodd" d="M0 0H31V31H0ZM6.200 6.200V24.800H12.400V18.600H18.600V12.400H24.800V6.200Z"/></svg>
<a class="t fs" id="t70" style="font-size:30px;color:#343a40;left:108.65px;top:296px;transform:scaleX(0.9874);">Start</a><div style="left:352px;top:294px;width:95px;height:34.8px;background:#59a64e;border-radius:8px"></div>
<span class="t fs" id="t71" style="font-size:22.5px;color:#fff;left:360.43px;top:301.2px;transform:scaleX(0.9563);">Designs</span><div style="left:11px;top:357px;width:468px;height:78.6px;background:#6c757d;border-radius:8px;box-shadow:0 2px 6px rgba(0,0,0,.3),0 2px 4px rgba(0,0,0,.2)"></div>
<svg style="left:50.5px;top:375.7px;width:40px;height:35.3px;" viewBox="0 0 40 35.300" preserveAspectRatio="none"><g fill="#fff"><rect x="0" y="7.300" width="3.400" height="20.700" rx="1.200"/><rect x="6.700" y="3.600" width="3.600" height="28.100" rx="1.200"/><rect x="13.700" y="0" width="26.300" height="35.300" rx="5.200"/></g></svg>
<a class="t fs" id="t72" style="font-size:30px;color:#fff;left:107.62px;top:381.8px;transform:scaleX(0.9676);">Design</a><div style="left:321.8px;top:379px;width:125.2px;height:34.8px;background:#324f7c;border-radius:8px"></div>
<span class="t fs" id="t73" style="font-size:22.5px;color:#fff;left:330.67px;top:386.2px;transform:scaleX(1.0095);">Situation 1</span></ul>
<svg style="left:0;top:1641px;width:10px;height:6px" viewBox="0 0 10 6"><path d="M0 1.500L8.500 6H0Z" fill="#2b2b2b"/></svg>
</aside>
<header>
<div style="left:495px;top:0px;width:2828px;height:103.6px;background:#6c757d"></div>
<div style="left:495px;top:0px;width:40px;height:103.5px;background:linear-gradient(90deg,rgba(0,0,0,.2),rgba(0,0,0,.07) 45%,rgba(0,0,0,0))"></div>
<svg style="left:543px;top:35.9px;width:27.2px;height:23.4px;" viewBox="0 0 27.200 24" preserveAspectRatio="none"><g fill="#dcdedf"><rect x="0" y="0" width="27.200" height="4" rx="1.700"/><rect x="0" y="10" width="27.200" height="4" rx="1.700"/><rect x="0" y="20" width="27.200" height="4" rx="1.700"/></g></svg>
<svg style="left:633.9px;top:31.7px;width:39.2px;height:31.5px;" viewBox="0 0 39.200 31.500" preserveAspectRatio="none"><g fill="#dcdedf"><path d="M18.400 20.400V23.200C18.400 25.500 20.200 27.400 22.500 27.400H27.500L33.300 31.500V27.400H35.100C37.400 27.400 39.200 25.500 39.200 23.200V12.300C39.200 10 37.400 8.200 35.100 8.200H28.200V17.700C28.200 20.800 25.700 22.200 23.400 22.200H15.800V20.400Z"/><path stroke="#6c757d" stroke-width="1.600" paint-order="stroke" d="M4.200 0H22C24.300 0 26.200 1.900 26.200 4.200V16.200C26.200 18.500 24.300 20.400 22 20.400H12L6.200 24V20.400H4.200C1.900 20.400 0 18.500 0 16.200V4.200C0 1.900 1.900 0 4.200 0Z"/></g><path fill="#6c757d" d="M11.500 12.400V11.800C11.500 10.300 12.300 9.600 13.500 8.800 14.400 8.200 14.800 7.800 14.800 7.100 14.800 6.300 14.100 5.800 13 5.800 11.800 5.800 11 6.300 10.400 7.200L8.400 5.900C9.400 4.400 11 3.500 13.200 3.500 15.800 3.500 17.500 4.800 17.500 6.800 17.500 8.500 16.600 9.300 15.500 10.100 14.500 10.700 14.100 11.100 14.100 11.900V12.400ZM12.800 17A1.600 1.600 0 1 1 12.800 13.800 1.600 1.600 0 1 1 12.800 17Z"/></svg>
<a class="t fs" id="t74" style="font-size:30px;color:#dcdedf;left:679.53px;top:33.7px;transform:scaleX(1.0055);">Help</a><svg style="left:3014.8px;top:34px;width:27.7px;height:27.5px;" viewBox="0 0 28 28" preserveAspectRatio="none"><g fill="#dcdedf"><path d="M1.200 0H11.600L0 11.600V1.200C0 .5 .5 0 1.200 0Z"/><g transform="translate(28 0) scale(-1 1)"><path d="M1.200 0H11.600L0 11.600V1.200C0 .5 .5 0 1.200 0Z"/></g><g transform="translate(0 28) scale(1 -1)"><path d="M1.200 0H11.600L0 11.600V1.200C0 .5 .5 0 1.200 0Z"/></g><g transform="translate(28 28) scale(-1 -1)"><path d="M1.200 0H11.600L0 11.600V1.200C0 .5 .5 0 1.200 0Z"/></g></g><path d="M5 5L23 23M23 5L5 23" stroke="#dcdedf" stroke-width="4.800" fill="none"/></svg>
<div style="left:3091.8px;top:32.9px;width:56px;height:31.7px;background:linear-gradient(180deg,#cfd3d7,#e4e6e9);border-radius:16px;border:2px solid #adb5bd"><i style="left:3px;top:2.6px;width:23px;height:23px;border-radius:50%;background:#adb5bd"></i></div>
<svg style="left:3163.7px;top:31.7px;width:31.6px;height:31.6px;" viewBox="0 0 32 32" preserveAspectRatio="none"><path fill="#fff" d="M22.28 0.85L23.92 8.08L31.15 9.72L27.20 16.00L31.15 22.28L23.92 23.92L22.28 31.15L16.00 27.20L9.72 31.15L8.08 23.92L0.85 22.28L4.80 16.00L0.85 9.72L8.08 8.08L9.72 0.85L16.00 4.80Z"/><circle cx="16" cy="16" r="6.700" fill="#6c757d"/><circle cx="16" cy="16" r="4.800" fill="#fff"/></svg>
<svg style="left:3243.8px;top:34px;width:31.7px;height:27.5px;" viewBox="0 0 31.700 27.500" preserveAspectRatio="none"><rect width="31.700" height="27.500" rx="3.400" fill="#dcdedf"/><rect x="4" y="4.2" width="5.400" height="4" fill="#6c757d"/><rect x="13.15" y="4.2" width="5.400" height="4" fill="#6c757d"/><rect x="22.3" y="4.2" width="5.400" height="4" fill="#6c757d"/><rect x="4" y="11.8" width="5.400" height="4" fill="#6c757d"/><rect x="13.15" y="11.8" width="5.400" height="4" fill="#6c757d"/><rect x="22.3" y="11.8" width="5.400" height="4" fill="#6c757d"/><rect x="4" y="19.4" width="5.400" height="4" fill="#6c757d"/><rect x="13.15" y="19.4" width="5.400" height="4" fill="#6c757d"/><rect x="22.3" y="19.4" width="5.400" height="4" fill="#6c757d"/></svg>
</header>
<div class="clip" style="left:1212px;top:915px;width:982px;height:478px;"><div style="left:0px;top:0px;width:982px;height:45px;background:#202020"></div>
<div style="left:0px;top:45px;width:982px;height:40px;background:#26282c"></div>
<div style="left:0px;top:85px;width:982px;height:47px;background:#525d6a"></div>
<div style="left:0px;top:131px;width:982px;height:2.5px;background:#131e2e"></div>
<div style="left:0px;top:134px;width:982px;height:344px;background:#3a4b64"></div>
<div style="left:2px;top:6px;width:32px;height:32px;background:#75aadb;border-radius:50%"></div>
<span class="t fse" id="t75" style="font-size:25px;color:#fff;left:9.64px;top:9.2px;transform:scaleX(0.9227);">R</span><span class="t fs" id="t76" style="font-size:24.5px;color:#8d8d8d;left:39.05px;top:12px;transform:scaleX(0.9543);">slides - RStudio</span><span class="t fs" id="t77" style="font-size:24.3px;color:#f2f2f2;left:10.76px;top:53px;transform:scaleX(0.9755);">File</span><span class="t fs" id="t78" style="font-size:24.3px;color:#f2f2f2;left:70.62px;top:53px;transform:scaleX(0.9924);">Edit</span><span class="t fs" id="t79" style="font-size:24.3px;color:#f2f2f2;left:137.08px;top:53px;transform:scaleX(0.9896);">Code</span><span class="t fs" id="t80" style="font-size:24.3px;color:#f2f2f2;left:217.6px;top:53px;transform:scaleX(0.9773);">View</span><span class="t fs" id="t81" style="font-size:24.3px;color:#f2f2f2;left:293.05px;top:53px;transform:scaleX(0.9776);">Plots</span><span class="t fs" id="t82" style="font-size:24.3px;color:#f2f2f2;left:369.37px;top:53px;transform:scaleX(0.9311);">Session</span><span class="t fs" id="t83" style="font-size:24.3px;color:#f2f2f2;left:472.61px;top:53px;transform:scaleX(1.0481);">Build</span><span class="t fs" id="t84" style="font-size:24.3px;color:#f2f2f2;left:551.76px;top:53px;transform:scaleX(1.0242);">Debug</span><span class="t fs" id="t85" style="font-size:24.3px;color:#f2f2f2;left:648.11px;top:53px;">Profile</span><span class="t fs" id="t86" style="font-size:24.3px;color:#f2f2f2;left:740.67px;top:53px;transform:scaleX(0.9727);">Tools</span><span class="t fs" id="t87" style="font-size:24.3px;color:#f2f2f2;left:819.54px;top:53px;transform:scaleX(1.0347);">Help</span><svg style="left:0px;top:85px;width:982px;height:48px" viewBox="1212 1000 982 48"><rect x="1236" y="1015" width="22" height="26" fill="#e9e9e9"/><circle cx="1234.200" cy="1023" r="10" fill="#43986a"/><path d="M1228.500 1023h12M1234.500 1017v12" stroke="#fff" stroke-width="3.600"/><path d="M1272 1025h10.500l-5.250 5.800z" fill="#e4e4e4"/><rect x="1290.5" y="1008" width="2.500" height="32" fill="#1c232c"/><rect x="1293" y="1008" width="1.500" height="32" fill="#6d7784"/><path d="M1314 1023l14-7 14 7v15l-14 7-14-7z" fill="#6a96b8" opacity=".62"/><circle cx="1314" cy="1023" r="10" fill="#43986a"/><path d="M1308 1023h12M1314 1017v12" stroke="#fff" stroke-width="3.600"/><rect x="1352" y="1008" width="2.500" height="32" fill="#1c232c"/><rect x="1354.5" y="1008" width="1.500" height="32" fill="#6d7784"/><path d="M1368 1038l6-16h22l-6 16z" fill="#e3c978"/><path d="M1368 1038v-18h8l3 3h12v4h-16z" fill="#c9ad58"/><path d="M1386 1022c2-6 8-8 14-7v-4l7 7-7 7v-4c-5-1-10 0-14 1z" fill="#4aa371"/><path d="M1414 1025h10.500l-5.250 5.800z" fill="#e4e4e4"/><rect x="1432" y="1008" width="2.500" height="32" fill="#1c232c"/><rect x="1434.5" y="1008" width="1.500" height="32" fill="#6d7784"/><rect x="1453" y="1017" width="24" height="24" rx="2" fill="#60708a"/><rect x="1458" y="1030" width="14" height="11" fill="#525d6a"/><rect x="1507" y="1014" width="22" height="22" rx="2" fill="#8fc0e0"/><rect x="1499" y="1020" width="22" height="22" rx="2" fill="#6f94c8"/><rect x="1503" y="1021" width="14" height="8" fill="#e8eef6"/><rect x="1504" y="1033" width="12" height="9" fill="#e8eef6"/><rect x="1541" y="1008" width="2.500" height="32" fill="#1c232c"/><rect x="1543.5" y="1008" width="1.500" height="32" fill="#6d7784"/><rect x="1568" y="1012" width="17" height="14" fill="#d9cf9d"/><rect x="1561" y="1025" width="30" height="13" rx="3" fill="#d9dadc"/><rect x="1565" y="1034" width="22" height="5" fill="#f2f2f2"/><rect x="1603" y="1008" width="2.500" height="32" fill="#1c232c"/><rect x="1605.5" y="1008" width="1.500" height="32" fill="#6d7784"/><rect x="1928" y="1008" width="2.500" height="32" fill="#1c232c"/><rect x="1930.5" y="1008" width="1.500" height="32" fill="#6d7784"/><rect x="1948" y="1013" width="29.500" height="27.500" rx="3" fill="#8a9099"/><g fill="#b4b8bd"><rect x="1951.500" y="1016.500" width="9.500" height="8.500" rx="1.500"/><rect x="1964.500" y="1016.500" width="9.500" height="8.500" rx="1.500"/><rect x="1951.500" y="1028.500" width="9.500" height="8.500" rx="1.500"/><rect x="1964.500" y="1028.500" width="9.500" height="8.500" rx="1.500"/></g><path d="M1993 1026h10.500l-5.250 5.800z" fill="#e4e4e4"/><path d="M2101.7 1026h10.500l-5.250 5.800z" fill="#e4e4e4"/></svg>
<div style="left:406.6px;top:94.4px;width:293.6px;height:34.6px;background:#6c7886;border:2px solid #3c4652;border-radius:7px"></div>
<svg style="left:418px;top:95px;width:40px;height:33px" viewBox="1630 1010 40 33"><path d="M1634 1040c0-10 5-16 14-16v-7l12 11-12 11v-7c-6 0-10 2-14 8z" fill="#8893a0"/></svg>
<span class="t fs" id="t88" style="font-size:24px;color:#c3c7cb;left:463.84px;top:102px;transform:scaleX(0.9635);">Go to file/function</span><span class="t fs" id="t89" style="font-size:24px;color:#f2f2f2;left:809.36px;top:101px;transform:scaleX(0.9134);">Addins</span><div style="left:16.5px;top:147.3px;width:966px;height:47px;background:#303843;border-top:2px solid #131e2e;border-left:2px solid #131e2e;border-radius:6px 0 0 0"></div>
<div style="left:16.5px;top:147.3px;width:213px;height:47px;background:#3b444f;border:2px solid #131e2e;border-bottom:none;border-radius:6px 6px 0 0"></div>
<div style="left:230.5px;top:147.3px;width:201.5px;height:47px;background:#3b444f;border:2px solid #131e2e;border-bottom:none;border-radius:6px 6px 0 0"></div>
<div style="left:17.5px;top:192.5px;width:965px;height:2px;background:#131e2e"></div>
<div style="left:432.5px;top:147.3px;width:210px;height:48px;background:#525d6a;border:2px solid #131e2e;border-bottom:none;border-radius:6px 6px 0 0"></div>
<svg style="left:0px;top:148px;width:982px;height:46px" viewBox="1212 1063 982 46"><path d="M1255 1071h15l8 8v20h-23z" fill="#e6e6e6"/><rect x="1248" y="1081" width="27" height="14" rx="2" fill="#4f9e4a"/><path d="M1408.5 1082l11 11M1419.5 1082l-11 11" stroke="#7d8792" stroke-width="3.400"/><path d="M1466 1071h15l8 8v20h-23z" fill="#e6e6e6"/><circle cx="1469.500" cy="1085" r="8.500" fill="#6f94c8"/><path d="M1461 1085h17M1469.500 1076.500v17" stroke="#dfe6f0" stroke-width="1.600"/><path d="M1610.5 1082l11 11M1621.5 1082l-11 11" stroke="#7d8792" stroke-width="3.400"/><path d="M1668 1071h15l8 8v20h-23z" fill="#fff"/><circle cx="1671" cy="1084" r="8.500" fill="#3f65ad"/><path d="M1820.5 1082l11 11M1831.5 1082l-11 11" stroke="#7d8792" stroke-width="3.400"/></svg>
<span class="t fs" id="t90" style="font-size:12.5px;color:#fff;font-weight:700;left:37.81px;top:168.3px;transform:scaleX(0.9034);">YML</span><span class="t fs" id="t91" style="font-size:24px;color:#f2f2f2;left:74.53px;top:160.3px;transform:scaleX(0.9062);">_quarto.yml</span><span class="t fs" id="t92" style="font-size:24px;color:#f2f2f2;left:287.1px;top:160.3px;transform:scaleX(0.9323);">index.qmd</span><span class="t fs" id="t93" style="font-size:15px;color:#fff;font-weight:700;left:452.47px;top:162.3px;transform:scaleX(1.1225);">R</span><span class="t fs" id="t94" style="font-size:24px;color:#f2f2f2;left:489.82px;top:160.3px;transform:scaleX(0.8645);">examples.R</span><div style="left:16.5px;top:194.5px;width:966px;height:43px;background:#525d6a;border-left:2px solid #131e2e"></div>
<div style="left:17.5px;top:236.5px;width:965px;height:3px;background:#131e2e"></div>
<svg style="left:0px;top:194.5px;width:982px;height:43px" viewBox="1212 1109.500 982 43"><path d="M1249 1134.500l13-12v7h15v10h-15v7z" fill="#dcdcdc"/><path d="M1311 1134.500l-13-12v7h-15v10h15v7z" fill="#8a939e"/><rect x="1325.5" y="1114" width="2.500" height="32" fill="#1c232c"/><rect x="1328" y="1114" width="1.500" height="32" fill="#6d7784"/><rect x="1353" y="1124" width="19" height="19" rx="3" fill="#e3e3e3"/><rect x="1353" y="1124" width="19" height="5" rx="2" fill="#b9cde8"/><path d="M1345 1144l10-10M1349 1133h7v7" stroke="#dcdcdc" stroke-width="3" fill="none"/><rect x="1388" y="1114" width="2.500" height="32" fill="#1c232c"/><rect x="1390.5" y="1114" width="1.500" height="32" fill="#6d7784"/><rect x="1409" y="1123" width="24" height="24" rx="2" fill="#60708a"/><rect x="1414" y="1136" width="14" height="11" fill="#525d6a"/><rect x="1655" y="1114" width="2.500" height="32" fill="#1c232c"/><rect x="1657.5" y="1114" width="1.500" height="32" fill="#6d7784"/><circle cx="1684" cy="1129" r="8.500" fill="#cfe0f0" stroke="#9fb3c8" stroke-width="2"/><path d="M1690 1136l11 10" stroke="#b07a3f" stroke-width="4.500" stroke-linecap="round"/><path d="M1724 1146l22-21" stroke="#3a3f4a" stroke-width="4.500"/><path d="M1724 1146l4-4" stroke="#6fa2d4" stroke-width="4.500"/><g stroke="#e08a4a" stroke-width="2"><path d="M1750 1116v6M1757 1126h-6M1755 1119l-4 4M1742 1117l3 4M1752 1133l-3-3"/></g><path d="M1768 1132h10.500l-5.250 5.800z" fill="#e4e4e4"/><rect x="1786.5" y="1114" width="2.500" height="32" fill="#1c232c"/><rect x="1789" y="1114" width="1.500" height="32" fill="#6d7784"/><rect x="1806" y="1121" width="26" height="24" rx="2" fill="#e6e6e6"/><g stroke="#b8b8b8" stroke-width="1.200"><path d="M1809 1126h21M1809 1130h21M1809 1134h21M1809 1138h21M1809 1142h21"/></g></svg>
<div style="left:244.5px;top:205.3px;width:25px;height:25px;background:#fff;border:2px solid #c8c8c8;border-radius:5px"></div>
<span class="t fs" id="t95" style="font-size:24px;color:#f2f2f2;left:276.05px;top:206.5px;transform:scaleX(0.8747);">Source on Save</span><div style="left:16.5px;top:239.5px;width:966px;height:240px;background:#313131;border-left:2px solid #131e2e"></div>
<div style="left:18.5px;top:239.5px;width:83.5px;height:240px;background:#3a3a3a"></div>
<span class="t fdm" id="t96" style="font-size:26.6px;color:#a0a0a0;left:61px;top:239.5px;">1</span><span class="t fdm" id="t97" style="font-size:26.6px;color:#a0a0a0;left:61px;top:271.5px;">2</span><span class="t fdm" id="t98" style="font-size:26.6px;color:#a0a0a0;left:61px;top:303.5px;">3</span><span class="t fdm" id="t99" style="font-size:26.6px;color:#a0a0a0;left:61px;top:335.5px;">4</span><span class="t fdm" id="t100" style="font-size:26.6px;color:#a0a0a0;left:61px;top:367.5px;">5</span><span class="t fdm" id="t101" style="font-size:26.6px;color:#a0a0a0;left:61px;top:399.5px;">6</span><span class="t fdm" id="t102" style="font-size:26.6px;color:#a0a0a0;left:61px;top:431.5px;">7</span><span class="t fdm" id="t103" style="font-size:26.6px;color:#a0a0a0;left:61px;top:463.5px;">8</span><span class="t fdm" id="t104" style="font-size:26.6px;color:#cc8c43;font-weight:400;left:109px;top:271.4px;">library</span><span class="t fdm" id="t105" style="font-size:26.6px;color:#6e9cc4;font-weight:400;left:221px;top:271.4px;">(</span><span class="t fdm" id="t106" style="font-size:26.6px;color:#ffffff;font-weight:400;left:237px;top:271.4px;-webkit-text-stroke:.5px #fff;">rpact</span><span class="t fdm" id="t107" style="font-size:26.6px;color:#6e9cc4;font-weight:400;left:317px;top:271.4px;">)</span><span class="t fdm" id="t108" style="font-size:26.6px;color:#ffffff;font-weight:400;left:109px;top:335.3px;-webkit-text-stroke:.5px #fff;">getDesignInverseNormal</span><span class="t fdm" id="t109" style="font-size:26.6px;color:#6e9cc4;font-weight:400;left:461px;top:335.3px;">(</span><span class="t fdm" id="t110" style="font-size:26.6px;color:#ffffff;font-weight:400;left:477px;top:335.3px;-webkit-text-stroke:.5px #fff;">kMax</span><span class="t fdm" id="t111" style="font-size:26.6px;color:#6e9cc4;font-weight:400;left:541px;top:335.3px;"> = 2) |&gt;</span><span class="t fdm" id="t112" style="font-size:26.6px;color:#ffffff;font-weight:400;left:109px;top:367.3px;-webkit-text-stroke:.5px #fff;">    getSampleSizeMeans</span><span class="t fdm" id="t113" style="font-size:26.6px;color:#6e9cc4;font-weight:400;left:461px;top:367.3px;">(</span><span class="t fdm" id="t114" style="font-size:26.6px;color:#ffffff;font-weight:400;left:477px;top:367.3px;-webkit-text-stroke:.5px #fff;">alternative</span><span class="t fdm" id="t115" style="font-size:26.6px;color:#6e9cc4;font-weight:400;left:653px;top:367.3px;"> = 0.2) |&gt;</span><span class="t fdm" id="t116" style="font-size:26.6px;color:#ffffff;font-weight:400;left:109px;top:399.3px;-webkit-text-stroke:.5px #fff;">    print</span><span class="t fdm" id="t117" style="font-size:26.6px;color:#6e9cc4;font-weight:400;left:253px;top:399.3px;">()</span><div style="left:108px;top:463px;width:3px;height:16px;background:#6e7b3a"></div>
</div>
<footer>
<div style="left:2737px;top:1354px;width:572px;height:279px;background:rgba(235,245,248,.9);border:2px solid #a8d0db;border-radius:9px"></div>
<b class="t fs" id="t118" style="font-size:30px;color:#6aa4b6;font-weight:700;left:2759.11px;top:1384.7px;transform:scaleX(0.9439);">R code copied to clipboard</b><p class="t fs" id="t119" style="font-size:30px;color:#6aa4b6;left:2759.8px;top:1432px;transform:scaleX(0.9549);">getDesignInverseNormal(kMax = 2) |&gt;</p><p class="t fs" id="t120" style="font-size:30px;color:#6aa4b6;left:2759.78px;top:1479.2px;transform:scaleX(0.9673);">getSampleSizeMeans(alternative =</p><p class="t fs" id="t121" style="font-size:30px;color:#6aa4b6;left:2759.93px;top:1526.5px;transform:scaleX(0.9129);">0.2) |&gt;</p><p class="t fs" id="t122" style="font-size:30px;color:#6aa4b6;left:2758.93px;top:1573.4px;transform:scaleX(1.0704);">print()</p><span class="t fs" id="t123" style="font-size:30px;color:#555;left:3265.75px;top:1372px;transform:scaleX(1.0832);">×</span></footer>
</div>
</body></html>
